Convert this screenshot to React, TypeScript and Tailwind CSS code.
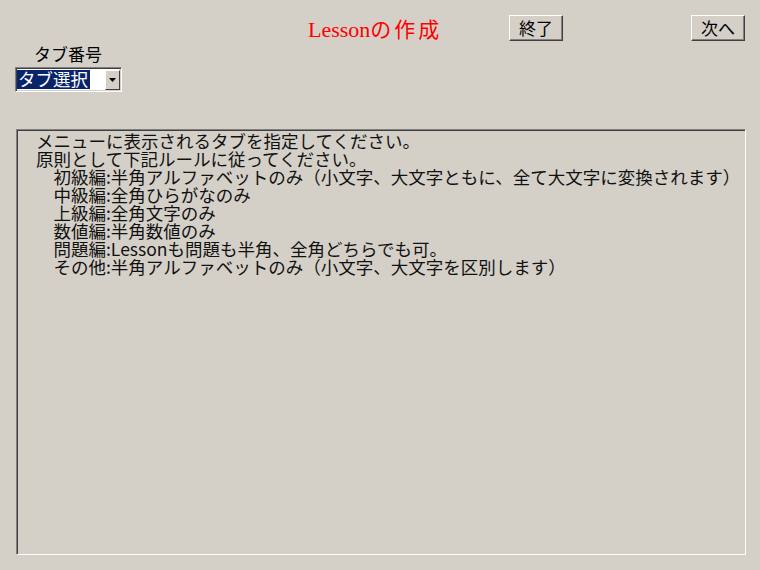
const lines = [
  'メニューに表示されるタブを指定してください。',
  '原則として下記ルールに従ってください。',
  '　初級編:半角アルファベットのみ（小文字、大文字ともに、全て大文字に変換されます）',
  '　中級編:全角ひらがなのみ',
  '　上級編:全角文字のみ',
  '　数値編:半角数値のみ',
  '　問題編:Lessonも問題も半角、全角どちらでも可。',
  '　その他:半角アルファベットのみ（小文字、大文字を区別します）',
];

const cjk = { fontFamily: '"Noto Sans CJK JP", "DejaVu Sans", sans-serif' };

const RaisedButton = ({ label }: { label: string }) => (
  <button
    className="w-[54px] h-[26px] bg-[#d4d0c8] border border-t-white border-l-white border-r-[#404040] border-b-[#404040] shadow-[inset_-1px_-1px_0_#808080] text-[17px] leading-none text-black flex items-center justify-center pb-[1px]"
    style={cjk}
  >
    {label}
  </button>
);

const App = () => {
  return (
    <div className="w-[760px] h-[570px] bg-[#d4d0c8] flex flex-col text-black" style={cjk}>
      <div className="flex items-start pt-[15px] h-[45px]">
        <h1 className="ml-[308px] w-[135px] mt-[1px] text-[#ff0000] text-[21px] leading-[24px] font-normal whitespace-nowrap">
          <span className="text-[22px]" style={{ fontFamily: '"Liberation Serif", serif' }}>Lesson</span>
          <span className="tracking-[3px]">の作成</span>
        </h1>
        <div className="ml-[66px]">
          <RaisedButton label="終了" />
        </div>
        <div className="ml-[128px]">
          <RaisedButton label="次へ" />
        </div>
      </div>

      <div className="ml-[34px] text-[17px] leading-[20px] mt-[-1px]">タブ番号</div>

      <div className="ml-[15px] mt-[3px] w-[107px] h-[25px] border border-t-[#808080] border-l-[#808080] border-r-white border-b-white shadow-[inset_1px_1px_0_#404040,inset_-1px_-1px_0_#d4d0c8] bg-white flex items-center pl-[1px] pr-[1px]">
        <span className="bg-[#0a246a] text-white text-[17.5px] leading-[18px] h-[19px] px-[1px] flex-1 mr-[15px] whitespace-nowrap">
          タブ選択
        </span>
        <span className="w-[15px] h-[20px] bg-[#d4d0c8] border border-t-white border-l-white border-r-[#404040] border-b-[#404040] flex items-center justify-center">
          <svg width="7" height="4" viewBox="0 0 7 4">
            <path d="M0 0h7L3.5 4z" fill="#000" />
          </svg>
        </span>
      </div>

      <div className="ml-[16px] mt-[37px] w-[730px] h-[426px] border border-t-[#808080] border-l-[#808080] border-r-white border-b-white shadow-[inset_1px_1px_0_#404040,inset_-1px_-1px_0_#d4d0c8] pl-[19px] pt-[2px] text-[17.5px] leading-[18px] whitespace-pre overflow-hidden text-[#111]">
        {lines.map((l) => (
          <div key={l}>{l}</div>
        ))}
      </div>
    </div>
  );
};

export default App;
